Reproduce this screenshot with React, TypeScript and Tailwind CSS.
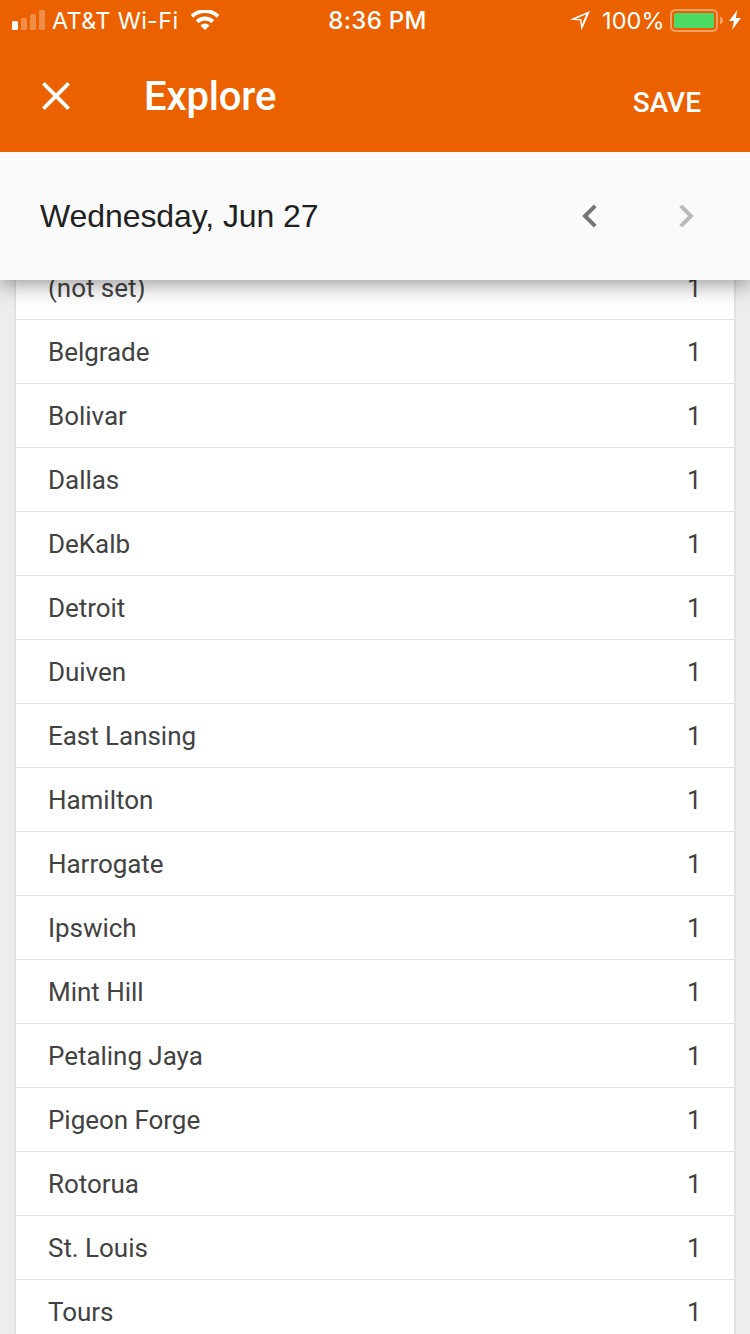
const cities: string[] = [
  "(not set)",
  "Belgrade",
  "Bolivar",
  "Dallas",
  "DeKalb",
  "Detroit",
  "Duiven",
  "East Lansing",
  "Hamilton",
  "Harrogate",
  "Ipswich",
  "Mint Hill",
  "Petaling Jaya",
  "Pigeon Forge",
  "Rotorua",
  "St. Louis",
  "Tours",
];

function StatusBar() {
  return (
    <div className="grid h-10 grid-cols-[1fr_auto_1fr] items-center pl-3 pr-[9px] font-['Inter',sans-serif] text-[24px] leading-none text-white">
      <div className="flex items-center">
        <svg width="33" height="20" viewBox="0 0 33 20" fill="white">
          <rect x="0" y="11" width="6" height="9" rx="1.6" />
          <rect x="9" y="8" width="6" height="12" rx="1.6" opacity=".28" />
          <rect x="18" y="4" width="6" height="16" rx="1.6" opacity=".28" />
          <rect x="27" y="0" width="6" height="20" rx="1.6" opacity=".28" />
        </svg>
        <span className="ml-[7px] w-[127px] whitespace-nowrap pt-[2px] text-[23.5px] font-normal tracking-[0.3px]">
          AT&amp;T Wi-Fi
        </span>
        <svg className="ml-3" width="28" height="20" viewBox="0 0 28 20">
          <path d="M1 6.3a19 19 0 0 1 26 0M6.1 11.6a11.5 11.5 0 0 1 15.8 0" fill="none" stroke="white" strokeWidth="3.9" />
          <path d="M14 20l-4.6-4.6a6.6 6.6 0 0 1 9.2 0z" fill="white" />
        </svg>
      </div>
      <span className="pl-[2px] pt-[2px] font-medium tracking-[0.3px]">8:36 PM</span>
      <div className="flex items-center justify-end">
        <svg width="20" height="20" viewBox="0 0 20 20">
          <path
            d="M20 1L0 9.6L10.1 10.6L11.4 20.5ZM16.3 4.2L11.9 14.6L11.5 9.2L6 8.7Z"
            fill="white"
            fillRule="evenodd"
          />
        </svg>
        <span className="ml-3 w-[62px] pt-[2px] text-[23.5px] font-normal tracking-[0.1px]">100%</span>
        <svg className="ml-[6px]" width="54" height="24" viewBox="0 0 54 24">
          <rect x="1" y="2" width="46" height="21" rx="4.5" fill="none" stroke="white" strokeOpacity=".4" strokeWidth="2" />
          <rect x="4" y="5" width="40" height="15" rx="1.5" fill="#4cd964" />
          <path d="M50 8.5c4 1 4 7 0 8z" fill="white" fillOpacity=".4" />
        </svg>
        <svg className="ml-[5px]" width="12" height="20" viewBox="0 0 12 20" fill="white">
          <path d="M8.4 0L0 11h5L3 20l9-12H6.8z" />
        </svg>
      </div>
    </div>
  );
}

export default function App() {
  return (
    <div className="flex h-[1334px] w-[750px] flex-col overflow-hidden bg-[#ededed] font-['Roboto',sans-serif]">
      <header className="z-20 h-[152px] shrink-0 bg-[#eb6100] text-white">
        <StatusBar />
        <div className="flex h-28 items-center pl-[42px] pr-[49px]">
          <svg width="28" height="28" viewBox="0 0 28 28" stroke="white" strokeWidth="3.8">
            <path d="M1.4 1.4l25.2 25.2M26.6 1.4L1.4 26.6" />
          </svg>
          <h1 className="ml-[74px] pt-[2px] text-[40px] font-medium leading-none tracking-[-0.15px]">Explore</h1>
          <button className="ml-auto mt-[13px] text-[28px] font-medium leading-none">SAVE</button>
        </div>
      </header>
      <div className="z-10 flex h-32 shrink-0 items-center bg-[#fafafa] pl-10 pr-14 shadow-[0_4px_20px_rgba(0,0,0,0.42)]">
        <span className="font-['Liberation_Sans',sans-serif] text-[32px] leading-none tracking-[-0.08px] text-[#212121]">
          Wednesday, Jun 27
        </span>
        <svg className="ml-auto" width="15" height="24" viewBox="0 0 15 24" fill="none" stroke="#757575" strokeWidth="4">
          <path d="M13.2 1.8L3 12l10.2 10.2" />
        </svg>
        <svg className="ml-[82px]" width="15" height="24" viewBox="0 0 15 24" fill="none" stroke="#bababa" strokeWidth="4">
          <path d="M1.8 1.8L12 12L1.8 22.2" />
        </svg>
      </div>
      <main className="-mt-6 flex-1 overflow-hidden px-[14px]">
        <ul className="border-x-2 border-[#e1e1e1] bg-white">
          {cities.map((city) => (
            <li
              key={city}
              className="flex h-16 items-center justify-between border-b border-[#e0e0e0] px-8 pt-px text-[26px] leading-none tracking-[-0.04px] text-[#424242]"
            >
              <span>{city}</span>
              <span className="pr-[0.5px]">1</span>
            </li>
          ))}
        </ul>
      </main>
    </div>
  );
}
